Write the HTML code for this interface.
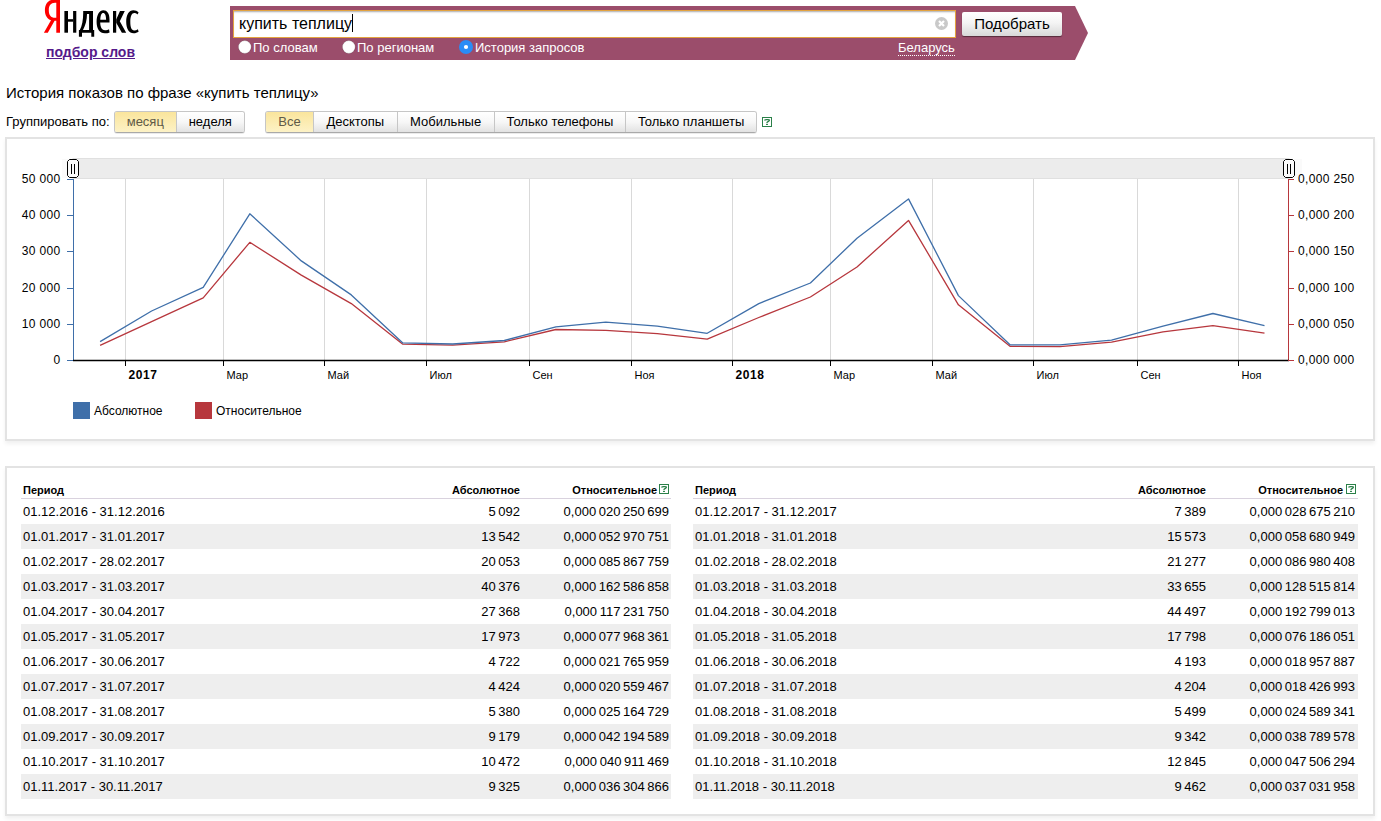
<!DOCTYPE html>
<html><head><meta charset="utf-8">
<style>
*{margin:0;padding:0;box-sizing:border-box}
html,body{width:1381px;height:821px;overflow:hidden;background:#fff;font-family:"Liberation Sans",sans-serif;color:#000}
.a{position:absolute;white-space:nowrap}
#logo{position:absolute;left:0;top:0}
#wlink{left:46px;top:44px;font-size:14px;font-weight:bold;color:#551a8b;text-decoration:underline}
#bar{position:absolute;left:230px;top:6px}
#inp{position:absolute;left:233px;top:10px;width:723px;height:28px;background:#fff;border:1px solid #e3a33f;box-shadow:inset 0 2px 2px -1px #aaa}
#q{left:239px;top:15px;font-size:16px}
#caret{position:absolute;left:352px;top:14px;width:1px;height:18px;background:#000}
#clr{position:absolute;left:935px;top:17px}
#btn{position:absolute;left:962px;top:12px;width:100px;height:24px;border-radius:2px;background:linear-gradient(#fff,#f4f4f4 45%,#d8d8d8);box-shadow:0 1px 1px rgba(0,0,0,.45);font-size:15px;text-align:center;line-height:24px}
.rad{position:absolute;top:39px}
.rt{top:40px;font-size:13px;color:#fff}
#bel{left:898px;top:40px;font-size:13px;color:#fff;border-bottom:1px dotted #fff;line-height:15px}
#title{left:6px;top:84px;font-size:15px}
#grp{left:6px;top:114px;font-size:13px}
.bg{position:absolute;top:111px;height:22px;border-radius:3px;border:1px solid #c6c6c6;border-bottom-color:#a9a9a9;box-shadow:0 1px 0 rgba(0,0,0,.08);display:flex;overflow:hidden}
.bg div{height:20px;line-height:20px;font-size:13px;text-align:center;background:linear-gradient(#fff,#f7f7f7 50%,#e2e2e2);border-left:1px solid #c6c6c6}
.bg div:first-child{border-left:none}
.bg div.sel{background:linear-gradient(#fae59c,#fdf2c6);color:#5f5a48}
.help{position:absolute;width:10px;height:10px;line-height:0}
.box{position:absolute;border:2px solid #e3e3e3;box-shadow:0 3px 4px rgba(0,0,0,.06)}
#chartbox{left:5px;top:137px;width:1370px;height:304px}
#tablebox{left:5px;top:466px;width:1370px;height:350px}
#chart{position:absolute;left:0;top:0}
.tbl{position:absolute;top:467px;font-size:13px}
.th{position:relative;height:32px;border-bottom:1px solid #d9d2de;font-size:11px;font-weight:bold}
.th span.p,.th span.r{top:17px}
.tr{position:relative;height:25px;line-height:25px}
.tr.g{background:#eee}
.tbl span.p{position:absolute;left:2px}
.tbl span.r{position:absolute}
</style></head><body>

<svg id="logo" width="150" height="40" viewBox="0 0 150 40">
<path fill="#f00" fill-rule="evenodd" d="M60,32.7 L60,-0.5 L55,-0.5 C48,-0.5 44.9,4 44.9,10.2 C44.9,15.5 47.5,19 51,20.3 L43.9,32.7 L47.8,32.7 L54.6,20.8 L56.3,20.8 L56.3,32.7 Z M56.3,2.7 L55,2.7 C50.8,2.7 48.8,5.5 48.8,10.2 C48.8,15 50.8,17.8 55,17.8 L56.3,17.8 Z"/>
<g fill="#000">
<rect x="64.4" y="11" width="3.6" height="21.7"/><rect x="73.1" y="11" width="3.2" height="21.7"/><rect x="68" y="19.2" width="5.1" height="2.5"/>
<path fill-rule="evenodd" d="M83.2,11 L93,11 L93,30 L94.2,30 L94.2,36.7 L91.3,36.7 L91.3,32.7 L82,32.7 L82,36.7 L78.9,36.7 L78.9,30 L79.8,30 C82,26 83.2,20 83.2,13 Z M87,14 L89.1,14 L89.1,30 L83,30 C85.5,25 87,20 87,14 Z"/>
<path fill-rule="evenodd" d="M109.5,22.6 L100.2,22.6 C100.3,27.5 102,30.3 105,30.3 C106.5,30.3 108,29.8 109,29.2 L109.6,32.4 C108.2,33 106.6,33.3 104.8,33.3 C99.6,33.3 96.6,29 96.6,21.8 C96.6,14.6 99.6,10.2 103.3,10.2 C107.3,10.2 109.5,13.6 109.5,19.5 Z M100.3,19.8 L106.1,19.8 C106.1,15.5 105,13 103.2,13 C101.4,13 100.4,15.5 100.3,19.8 Z"/>
<rect x="113" y="11" width="3.2" height="21.7"/>
<path d="M116.2,19.5 L120,11 L124.8,11 L119.8,21.3 L126.2,32.7 L121.9,32.7 L116.2,22.8 Z"/>
<path d="M138.6,12.5 C137.2,10.9 135.5,10.2 133.4,10.2 C129,10.2 126.2,14.6 126.2,21.8 C126.2,29 129,33.3 133.6,33.3 C135.6,33.3 137.3,32.7 138.6,31.8 L137.9,29.2 C136.8,30 135.5,30.4 134.2,30.4 C131.6,30.4 130.3,27.5 130.3,21.8 C130.3,16 131.8,13 134.3,13 C135.5,13 136.6,13.5 137.5,14.5 Z"/>
</g></svg>
<div id="wlink" class="a">подбор слов</div>

<svg id="bar" width="860" height="54" viewBox="0 0 860 54"><path d="M0,0 L845,0 L858,27 L845,54 L0,54 Z" fill="#9b4d6b"/></svg>
<div id="inp"></div>
<div id="q" class="a">купить теплицу</div>
<div id="caret"></div>
<svg id="clr" width="14" height="14" viewBox="0 0 14 14"><circle cx="6.5" cy="6.5" r="6.5" fill="#c9c9c9"/><path d="M4,4 L9,9 M9,4 L4,9" stroke="#fff" stroke-width="2.2"/></svg>
<div id="btn">Подобрать</div>
<svg class="rad" style="left:237px" width="16" height="16" viewBox="0 0 16 16"><circle cx="7.8" cy="8" r="6.4" fill="#fff" stroke="rgba(0,0,0,.22)" stroke-width="0.7"/></svg><div class="a rt" style="left:253px">По словам</div>
<svg class="rad" style="left:341px" width="16" height="16" viewBox="0 0 16 16"><circle cx="7.8" cy="8" r="6.4" fill="#fff" stroke="rgba(0,0,0,.22)" stroke-width="0.7"/></svg><div class="a rt" style="left:357px">По регионам</div>
<svg class="rad" style="left:458px" width="16" height="16" viewBox="0 0 16 16"><circle cx="8" cy="8" r="7" fill="#2a8cf6"/><circle cx="8" cy="8" r="2.1" fill="#fff"/></svg><div class="a rt" style="left:475px">История запросов</div>
<div id="bel" class="a">Беларусь</div>

<div id="title" class="a">История показов по фразе «купить теплицу»</div>
<div id="grp" class="a">Группировать по:</div>
<div class="bg" style="left:114px;width:131px"><div class="sel" style="width:61px">месяц</div><div style="width:69px">неделя</div></div>
<div class="bg" style="left:265px;width:492px"><div class="sel" style="width:47px">Все</div><div style="width:84px">Десктопы</div><div style="width:97px">Мобильные</div><div style="width:132px">Только телефоны</div><div style="width:131px">Только планшеты</div></div>
<div class="help" style="left:762px;top:117px"><svg width="10" height="10" viewBox="0 0 10 10"><rect x="0.5" y="0.5" width="9" height="9" fill="#fff" stroke="#2b8049"/><path d="M2.4,3.4 Q3.2,2.5 4.4,2.5 H6.2 Q7.5,2.6 7.4,3.4 Q6.8,4.3 5.6,4.9 Q4.9,5.3 4.9,6" stroke="#2b8049" stroke-width="1.25" fill="none"/><rect x="4" y="6.8" width="2" height="1.2" rx="0.5" fill="#2b8049"/></svg></div>

<div class="box" id="chartbox"></div>
<svg id="chart" width="1381" height="440" viewBox="0 0 1381 440" font-family="Liberation Sans" font-size="11">
<rect x="62" y="159" width="1240" height="19" fill="#fafafa"/>
<rect x="73" y="158.5" width="1216" height="20" fill="#ececec" stroke="#e0e0e0" stroke-width="1"/>
<path d="M125.5,179 V360" stroke="#d9d9d9" stroke-width="1"/>
<path d="M223.5,179 V360" stroke="#d9d9d9" stroke-width="1"/>
<path d="M324.5,179 V360" stroke="#d9d9d9" stroke-width="1"/>
<path d="M426.5,179 V360" stroke="#d9d9d9" stroke-width="1"/>
<path d="M529.5,179 V360" stroke="#d9d9d9" stroke-width="1"/>
<path d="M631.5,179 V360" stroke="#d9d9d9" stroke-width="1"/>
<path d="M732.5,179 V360" stroke="#d9d9d9" stroke-width="1"/>
<path d="M830.5,179 V360" stroke="#d9d9d9" stroke-width="1"/>
<path d="M932.5,179 V360" stroke="#d9d9d9" stroke-width="1"/>
<path d="M1033.5,179 V360" stroke="#d9d9d9" stroke-width="1"/>
<path d="M1137.5,179 V360" stroke="#d9d9d9" stroke-width="1"/>
<path d="M1238.5,179 V360" stroke="#d9d9d9" stroke-width="1"/>
<path d="M125.5,360 V366" stroke="#000" stroke-width="1"/>
<text x="128.5" y="379" font-weight="bold" font-size="12" letter-spacing="0.6">2017</text>
<path d="M223.5,360 V366" stroke="#000" stroke-width="1"/>
<text x="226.5" y="379">Мар</text>
<path d="M324.5,360 V366" stroke="#000" stroke-width="1"/>
<text x="327.5" y="379">Май</text>
<path d="M426.5,360 V366" stroke="#000" stroke-width="1"/>
<text x="429.5" y="379">Июл</text>
<path d="M529.5,360 V366" stroke="#000" stroke-width="1"/>
<text x="532.5" y="379">Сен</text>
<path d="M631.5,360 V366" stroke="#000" stroke-width="1"/>
<text x="634.5" y="379">Ноя</text>
<path d="M732.5,360 V366" stroke="#000" stroke-width="1"/>
<text x="735.5" y="379" font-weight="bold" font-size="12" letter-spacing="0.6">2018</text>
<path d="M830.5,360 V366" stroke="#000" stroke-width="1"/>
<text x="833.5" y="379">Мар</text>
<path d="M932.5,360 V366" stroke="#000" stroke-width="1"/>
<text x="935.5" y="379">Май</text>
<path d="M1033.5,360 V366" stroke="#000" stroke-width="1"/>
<text x="1036.5" y="379">Июл</text>
<path d="M1137.5,360 V366" stroke="#000" stroke-width="1"/>
<text x="1140.5" y="379">Сен</text>
<path d="M1238.5,360 V366" stroke="#000" stroke-width="1"/>
<text x="1241.5" y="379">Ноя</text>
<path d="M73.5,179 V360" stroke="#3f6fa9" stroke-width="1"/>
<path d="M1288.5,179 V360" stroke="#b7373d" stroke-width="1"/>
<path d="M73,360.5 H1289" stroke="#000" stroke-width="1.3"/>
<path d="M67,360.5 H73" stroke="#3f6fa9" stroke-width="1"/>
<path d="M1288,360.5 H1294" stroke="#b7373d" stroke-width="1"/>
<text x="60.5" y="364.0" text-anchor="end" font-size="12" letter-spacing="0.35">0</text>
<text x="1298" y="364.0" font-size="12" letter-spacing="0.35">0,000 000</text>
<path d="M67,324.5 H73" stroke="#3f6fa9" stroke-width="1"/>
<path d="M1288,324.5 H1294" stroke="#b7373d" stroke-width="1"/>
<text x="60.5" y="327.8" text-anchor="end" font-size="12" letter-spacing="0.35">10 000</text>
<text x="1298" y="327.8" font-size="12" letter-spacing="0.35">0,000 050</text>
<path d="M67,288.5 H73" stroke="#3f6fa9" stroke-width="1"/>
<path d="M1288,288.5 H1294" stroke="#b7373d" stroke-width="1"/>
<text x="60.5" y="291.6" text-anchor="end" font-size="12" letter-spacing="0.35">20 000</text>
<text x="1298" y="291.6" font-size="12" letter-spacing="0.35">0,000 100</text>
<path d="M67,251.5 H73" stroke="#3f6fa9" stroke-width="1"/>
<path d="M1288,251.5 H1294" stroke="#b7373d" stroke-width="1"/>
<text x="60.5" y="255.4" text-anchor="end" font-size="12" letter-spacing="0.35">30 000</text>
<text x="1298" y="255.4" font-size="12" letter-spacing="0.35">0,000 150</text>
<path d="M67,215.5 H73" stroke="#3f6fa9" stroke-width="1"/>
<path d="M1288,215.5 H1294" stroke="#b7373d" stroke-width="1"/>
<text x="60.5" y="219.2" text-anchor="end" font-size="12" letter-spacing="0.35">40 000</text>
<text x="1298" y="219.2" font-size="12" letter-spacing="0.35">0,000 200</text>
<path d="M67,179.5 H73" stroke="#3f6fa9" stroke-width="1"/>
<path d="M1288,179.5 H1294" stroke="#b7373d" stroke-width="1"/>
<text x="60.5" y="183.0" text-anchor="end" font-size="12" letter-spacing="0.35">50 000</text>
<text x="1298" y="183.0" font-size="12" letter-spacing="0.35">0,000 250</text>
<polyline points="100.1,345.3 151.6,321.6 203.2,297.8 249.8,242.3 301.3,275.1 351.3,303.6 402.8,344.2 452.7,345.1 504.3,341.8 555.9,329.5 605.8,330.4 657.3,333.7 707.2,339.2 758.8,317.5 810.4,297.0 857.0,267.0 908.5,220.4 958.4,304.8 1010.0,346.3 1059.9,346.7 1111.5,342.2 1163.0,331.9 1212.9,325.6 1264.5,333.2" fill="none" stroke="#b7373d" stroke-width="1.3" stroke-linejoin="round"/>
<polyline points="100.1,341.6 151.6,311.0 203.2,287.4 249.8,213.8 301.3,260.9 351.3,294.9 402.8,342.9 452.7,344.0 504.3,340.5 555.9,326.8 605.8,322.1 657.3,326.2 707.2,333.3 758.8,303.6 810.4,283.0 857.0,238.2 908.5,198.9 958.4,295.6 1010.0,344.8 1059.9,344.8 1111.5,340.1 1163.0,326.2 1212.9,313.5 1264.5,325.7" fill="none" stroke="#3f6fa9" stroke-width="1.3" stroke-linejoin="round"/>
<path d="M69.5,159.5 H76.5 L78.5,161.5 V175.5 L76.5,177.5 H69.5 L67.5,175.5 V161.5 Z" fill="#fafafa" stroke="#000" stroke-width="1"/>
<path d="M71.5,164 V174 M74.5,164 V174" stroke="#000" stroke-width="1"/>
<path d="M1285.5,159.5 H1292.5 L1294.5,161.5 V175.5 L1292.5,177.5 H1285.5 L1283.5,175.5 V161.5 Z" fill="#fafafa" stroke="#000" stroke-width="1"/>
<path d="M1287.5,164 V174 M1290.5,164 V174" stroke="#000" stroke-width="1"/>
<rect x="73" y="402" width="17" height="17" fill="#3f6fa9"/>
<text x="94" y="414.5" font-size="12">Абсолютное</text>
<rect x="195" y="402" width="17" height="17" fill="#b7373d"/>
<text x="216" y="414.5" font-size="12">Относительное</text>
</svg>

<div class="box" id="tablebox"></div>
<div class="tbl" style="left:21px;width:650px">
<div class="th"><span class="p">Период</span><span class="r" style="right:151px">Абсолютное</span><span class="r" style="right:14px">Относительное</span><span class="help" style="left:638px;top:17px"><svg width="10" height="10" viewBox="0 0 10 10"><rect x="0.5" y="0.5" width="9" height="9" fill="#fff" stroke="#2b8049"/><path d="M2.4,3.4 Q3.2,2.5 4.4,2.5 H6.2 Q7.5,2.6 7.4,3.4 Q6.8,4.3 5.6,4.9 Q4.9,5.3 4.9,6" stroke="#2b8049" stroke-width="1.25" fill="none"/><rect x="4" y="6.8" width="2" height="1.2" rx="0.5" fill="#2b8049"/></svg></span></div>
<div class="tr"><span class="p">01.12.2016 - 31.12.2016</span><span class="r" style="right:151px">5 092</span><span class="r" style="right:2px">0,000 020 250 699</span></div>
<div class="tr g"><span class="p">01.01.2017 - 31.01.2017</span><span class="r" style="right:151px">13 542</span><span class="r" style="right:2px">0,000 052 970 751</span></div>
<div class="tr"><span class="p">01.02.2017 - 28.02.2017</span><span class="r" style="right:151px">20 053</span><span class="r" style="right:2px">0,000 085 867 759</span></div>
<div class="tr g"><span class="p">01.03.2017 - 31.03.2017</span><span class="r" style="right:151px">40 376</span><span class="r" style="right:2px">0,000 162 586 858</span></div>
<div class="tr"><span class="p">01.04.2017 - 30.04.2017</span><span class="r" style="right:151px">27 368</span><span class="r" style="right:2px">0,000 117 231 750</span></div>
<div class="tr g"><span class="p">01.05.2017 - 31.05.2017</span><span class="r" style="right:151px">17 973</span><span class="r" style="right:2px">0,000 077 968 361</span></div>
<div class="tr"><span class="p">01.06.2017 - 30.06.2017</span><span class="r" style="right:151px">4 722</span><span class="r" style="right:2px">0,000 021 765 959</span></div>
<div class="tr g"><span class="p">01.07.2017 - 31.07.2017</span><span class="r" style="right:151px">4 424</span><span class="r" style="right:2px">0,000 020 559 467</span></div>
<div class="tr"><span class="p">01.08.2017 - 31.08.2017</span><span class="r" style="right:151px">5 380</span><span class="r" style="right:2px">0,000 025 164 729</span></div>
<div class="tr g"><span class="p">01.09.2017 - 30.09.2017</span><span class="r" style="right:151px">9 179</span><span class="r" style="right:2px">0,000 042 194 589</span></div>
<div class="tr"><span class="p">01.10.2017 - 31.10.2017</span><span class="r" style="right:151px">10 472</span><span class="r" style="right:2px">0,000 040 911 469</span></div>
<div class="tr g"><span class="p">01.11.2017 - 30.11.2017</span><span class="r" style="right:151px">9 325</span><span class="r" style="right:2px">0,000 036 304 866</span></div>
</div>
<div class="tbl" style="left:693px;width:665px">
<div class="th"><span class="p">Период</span><span class="r" style="right:152px">Абсолютное</span><span class="r" style="right:15px">Относительное</span><span class="help" style="left:653px;top:17px"><svg width="10" height="10" viewBox="0 0 10 10"><rect x="0.5" y="0.5" width="9" height="9" fill="#fff" stroke="#2b8049"/><path d="M2.4,3.4 Q3.2,2.5 4.4,2.5 H6.2 Q7.5,2.6 7.4,3.4 Q6.8,4.3 5.6,4.9 Q4.9,5.3 4.9,6" stroke="#2b8049" stroke-width="1.25" fill="none"/><rect x="4" y="6.8" width="2" height="1.2" rx="0.5" fill="#2b8049"/></svg></span></div>
<div class="tr"><span class="p">01.12.2017 - 31.12.2017</span><span class="r" style="right:152px">7 389</span><span class="r" style="right:3px">0,000 028 675 210</span></div>
<div class="tr g"><span class="p">01.01.2018 - 31.01.2018</span><span class="r" style="right:152px">15 573</span><span class="r" style="right:3px">0,000 058 680 949</span></div>
<div class="tr"><span class="p">01.02.2018 - 28.02.2018</span><span class="r" style="right:152px">21 277</span><span class="r" style="right:3px">0,000 086 980 408</span></div>
<div class="tr g"><span class="p">01.03.2018 - 31.03.2018</span><span class="r" style="right:152px">33 655</span><span class="r" style="right:3px">0,000 128 515 814</span></div>
<div class="tr"><span class="p">01.04.2018 - 30.04.2018</span><span class="r" style="right:152px">44 497</span><span class="r" style="right:3px">0,000 192 799 013</span></div>
<div class="tr g"><span class="p">01.05.2018 - 31.05.2018</span><span class="r" style="right:152px">17 798</span><span class="r" style="right:3px">0,000 076 186 051</span></div>
<div class="tr"><span class="p">01.06.2018 - 30.06.2018</span><span class="r" style="right:152px">4 193</span><span class="r" style="right:3px">0,000 018 957 887</span></div>
<div class="tr g"><span class="p">01.07.2018 - 31.07.2018</span><span class="r" style="right:152px">4 204</span><span class="r" style="right:3px">0,000 018 426 993</span></div>
<div class="tr"><span class="p">01.08.2018 - 31.08.2018</span><span class="r" style="right:152px">5 499</span><span class="r" style="right:3px">0,000 024 589 341</span></div>
<div class="tr g"><span class="p">01.09.2018 - 30.09.2018</span><span class="r" style="right:152px">9 342</span><span class="r" style="right:3px">0,000 038 789 578</span></div>
<div class="tr"><span class="p">01.10.2018 - 31.10.2018</span><span class="r" style="right:152px">12 845</span><span class="r" style="right:3px">0,000 047 506 294</span></div>
<div class="tr g"><span class="p">01.11.2018 - 30.11.2018</span><span class="r" style="right:152px">9 462</span><span class="r" style="right:3px">0,000 037 031 958</span></div>
</div>
</body></html>
